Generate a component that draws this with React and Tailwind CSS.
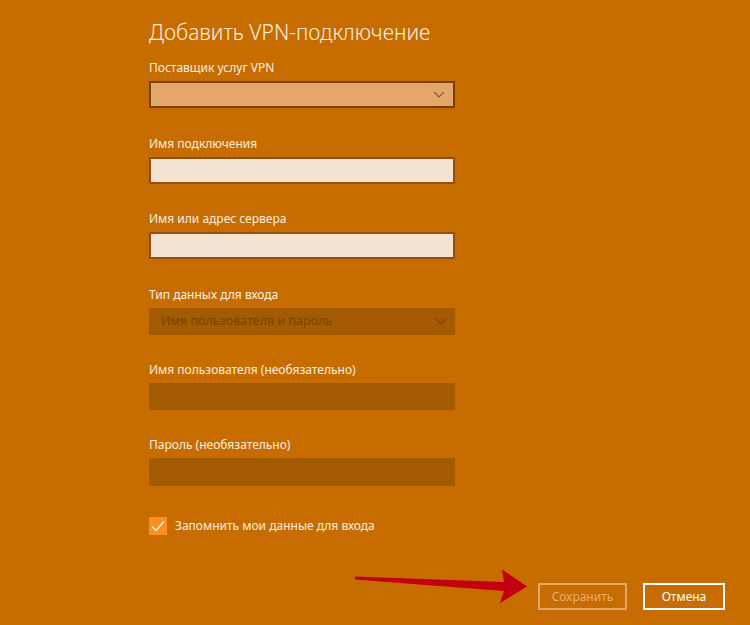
import React from "react";

function Chevron({ color }) {
  return (
    <svg width="12" height="7" viewBox="0 0 12 7" className="mr-[8px]">
      <path d="M1 1 L6 6 L11 1" fill="none" stroke={color} strokeWidth="1.2" />
    </svg>
  );
}

function Label({ children }) {
  return <div className="h-[20px] leading-[20px] text-[12px] text-[#fbeee0]">{children}</div>;
}

export default function App() {
  return (
    <div
      className="relative w-[750px] h-[625px] bg-[#c76c00] overflow-hidden flex flex-col"
      style={{ fontFamily: '"Noto Sans", "Open Sans", sans-serif' }}
    >
      <div className="pl-[149px] pt-[17px] flex flex-col">
        <div className="h-[30px] leading-[30px] text-[21px] font-light text-[#fbeee0]">
          Добавить VPN-подключение
        </div>

        <div className="mt-[11px]">
          <Label>Поставщик услуг VPN</Label>
          <div className="mt-[3px] w-[306px] h-[27px] border-2 border-[#7a4200] bg-[#e3a76b] flex items-center justify-end">
            <Chevron color="#8a5a30" />
          </div>
        </div>

        <div className="mt-[26px]">
          <Label>Имя подключения</Label>
          <div className="mt-[3px] w-[306px] h-[27px] border-2 border-[#8e5014] bg-[#f4e3d0]" />
        </div>

        <div className="mt-[25px]">
          <Label>Имя или адрес сервера</Label>
          <div className="mt-[3px] w-[306px] h-[27px] border-2 border-[#8e5014] bg-[#f4e3d0]" />
        </div>

        <div className="mt-[26px]">
          <Label>Тип данных для входа</Label>
          <div className="mt-[3px] w-[306px] h-[27px] bg-[#a35a00] flex items-center justify-between pl-[12px]">
            <span className="text-[12.5px] text-[#7a4206]">Имя пользователя и пароль</span>
            <Chevron color="#7a4206" />
          </div>
        </div>

        <div className="mt-[25px]">
          <Label>Имя пользователя (необязательно)</Label>
          <div className="mt-[3px] w-[306px] h-[27px] bg-[#a35a00]" />
        </div>

        <div className="mt-[25px]">
          <Label>Пароль (необязательно)</Label>
          <div className="mt-[3px] w-[306px] h-[28px] bg-[#a35a00]" />
        </div>

        <div className="mt-[31px] flex items-center gap-[8px]">
          <div className="w-[18px] h-[18px] bg-[#f8901f] flex items-center justify-center">
            <svg width="14" height="12" viewBox="0 0 14 12">
              <path d="M1 6.5 L5 10.5 L13 1.5" fill="none" stroke="#fff4e6" strokeWidth="1.4" />
            </svg>
          </div>
          <span className="text-[12px] text-[#fbeee0]">Запомнить мои данные для входа</span>
        </div>
      </div>

      <div className="mt-[48px] flex justify-end gap-[16px] pr-[25px]">
        <div className="w-[89px] h-[27px] border-2 border-[#e2a768] flex items-center justify-center text-[12px] text-[#e6ad72]">
          Сохранить
        </div>
        <div className="w-[82px] h-[27px] border-2 border-white flex items-center justify-center text-[12px] text-white">
          Отмена
        </div>
      </div>

      <svg className="absolute left-0 top-0 pointer-events-none" width="750" height="625">
        <polygon
          points="355,576.5 504,582 502,569.5 527,586.5 500,603 504,591 355,579.5"
          fill="#c2000f"
        />
      </svg>
    </div>
  );
}
